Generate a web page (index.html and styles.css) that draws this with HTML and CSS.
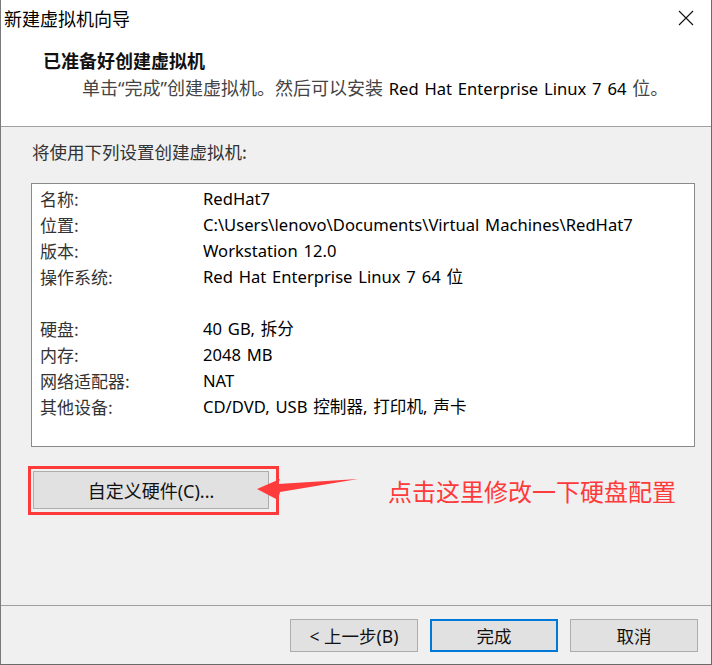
FILE: index.html
```html
<!DOCTYPE html>
<html lang="zh-CN">
<head>
<meta charset="utf-8">
<title>新建虚拟机向导</title>
<link rel="stylesheet" href="styles.css">
</head>
<body>
<div class="window">
  <div class="header">
    <div class="titlebar">
      <span class="title">新建虚拟机向导</span>
      <svg class="close" width="16" height="16" viewBox="0 0 16 16"><path d="M1 1 L15 15 M15 1 L1 15" stroke="#111" stroke-width="1.1" fill="none"/></svg>
    </div>
    <div class="heading">已准备好创建虚拟机</div>
    <div class="subtitle"><span class="cjk">单击“完成”创建虚拟机。然后可以安装</span> Red Hat Enterprise Linux 7 64 <span class="cjk">位。</span></div>
  </div>
  <div class="body">
    <div class="intro">将使用下列设置创建虚拟机:</div>
    <div class="listbox">
      <div class="row"><span class="label">名称:</span><span class="value">RedHat7</span></div>
      <div class="row"><span class="label">位置:</span><span class="value">C:\Users\lenovo\Documents\Virtual Machines\RedHat7</span></div>
      <div class="row"><span class="label">版本:</span><span class="value">Workstation 12.0</span></div>
      <div class="row"><span class="label">操作系统:</span><span class="value">Red Hat Enterprise Linux 7 64 位</span></div>
      <div class="row"><span class="label"></span><span class="value"></span></div>
      <div class="row"><span class="label">硬盘:</span><span class="value">40 GB, 拆分</span></div>
      <div class="row"><span class="label">内存:</span><span class="value">2048 MB</span></div>
      <div class="row"><span class="label">网络适配器:</span><span class="value">NAT</span></div>
      <div class="row"><span class="label">其他设备:</span><span class="value">CD/DVD, USB 控制器, 打印机, 声卡</span></div>
    </div>
    <div class="custom-row">
      <div class="highlight"><div class="btn custom">自定义硬件(C)...</div></div>
      <svg class="arrow" width="110" height="34" viewBox="0 0 110 34"><polygon points="3,19 26,9 24,14 104,9 26,22 24,30" fill="#ff3b3b"/></svg>
      <span class="annotation">点击这里修改一下硬盘配置</span>
    </div>
  </div>
  <div class="footer">
    <div class="btn">&lt; 上一步(B)</div>
    <div class="btn default">完成</div>
    <div class="btn">取消</div>
  </div>
</div>
</body>
</html>
```
FILE: styles.css
```css
html, body {
  margin: 0;
  padding: 0;
  background: #ffffff;
}
body {
  font-family: "Noto Sans", "Noto Sans CJK SC", sans-serif;
  color: #111;
}
.window {
  width: 712px;
  height: 665px;
  box-sizing: border-box;
  border-left: 1px solid #7a7a7a;
  border-right: 1px solid #6a6a6a;
  border-bottom: 1px solid #6a6a6a;
  display: flex;
  flex-direction: column;
  background: #f0f0f0;
}
.header {
  background: #ffffff;
  height: 127px;
  box-sizing: border-box;
  border-bottom: 1px solid #a0a0a0;
}
.titlebar {
  height: 36px;
  display: flex;
  align-items: center;
  justify-content: space-between;
  padding: 0 17px 0 3px;
}
.title {
  font-family: "Noto Sans CJK SC", sans-serif;
  font-size: 18px;
  color: #000;
  line-height: 36px;
}
.close {
  display: block;
}
.heading {
  font-family: "Noto Sans CJK SC", sans-serif;
  font-weight: 700;
  font-size: 18px;
  line-height: 24px;
  margin-top: 12px;
  padding-left: 42px;
  color: #111;
}
.subtitle {
  font-size: 16.6px;
  line-height: 24px;
  margin-top: 4px;
  padding-left: 81px;
  color: #000;
  white-space: nowrap;
  word-spacing: 1.5px;
}
.subtitle .cjk {
  font-size: 18px;
  color: #444;
}
.body {
  flex: 1;
  padding: 13px 0 0 0;
  display: flex;
  flex-direction: column;
}
.intro {
  font-family: "Noto Sans CJK SC", sans-serif;
  font-size: 17.5px;
  line-height: 24px;
  padding-left: 31px;
  color: #333;
}
.listbox {
  margin: 19px 0 0 30px;
  width: 664px;
  height: 264px;
  box-sizing: border-box;
  background: #ffffff;
  border: 1px solid #8a8a8a;
  padding: 2px 0 0 8px;
}
.row {
  display: grid;
  grid-template-columns: 163px 1fr;
  height: 26px;
  line-height: 26px;
  font-size: 17px;
  white-space: nowrap;
}
.label {
  font-family: "Noto Sans CJK SC", sans-serif;
  color: #333;
}
.value {
  color: #000;
  font-size: 16.6px;
  word-spacing: 1.5px;
}
.custom-row {
  position: relative;
  margin: 19px 0 0 27px;
  display: flex;
  align-items: center;
}
.highlight {
  border: 3px solid #ff3a3a;
  padding: 2px 7px 3px 2px;
}
.btn {
  box-sizing: border-box;
  width: 128px;
  height: 33px;
  background: #e1e1e1;
  border: 1px solid #adadad;
  display: flex;
  align-items: center;
  justify-content: center;
  font-size: 17.5px;
  color: #111;
}
.btn.custom {
  width: 236px;
  height: 38px;
  font-size: 18px;
}
.arrow {
  position: absolute;
  left: 226px;
  top: 4px;
}
.annotation {
  margin-left: 109px;
  font-family: "Noto Sans CJK SC", sans-serif;
  font-size: 24px;
  color: #ff3a3a;
  line-height: 30px;
}
.footer {
  height: 59px;
  box-sizing: border-box;
  border-top: 1px solid #a0a0a0;
  display: flex;
  justify-content: flex-end;
  align-items: flex-start;
  gap: 12px;
  padding: 13px 13px 0 0;
}
.btn.default {
  border: 2px solid #0078d7;
}
```
